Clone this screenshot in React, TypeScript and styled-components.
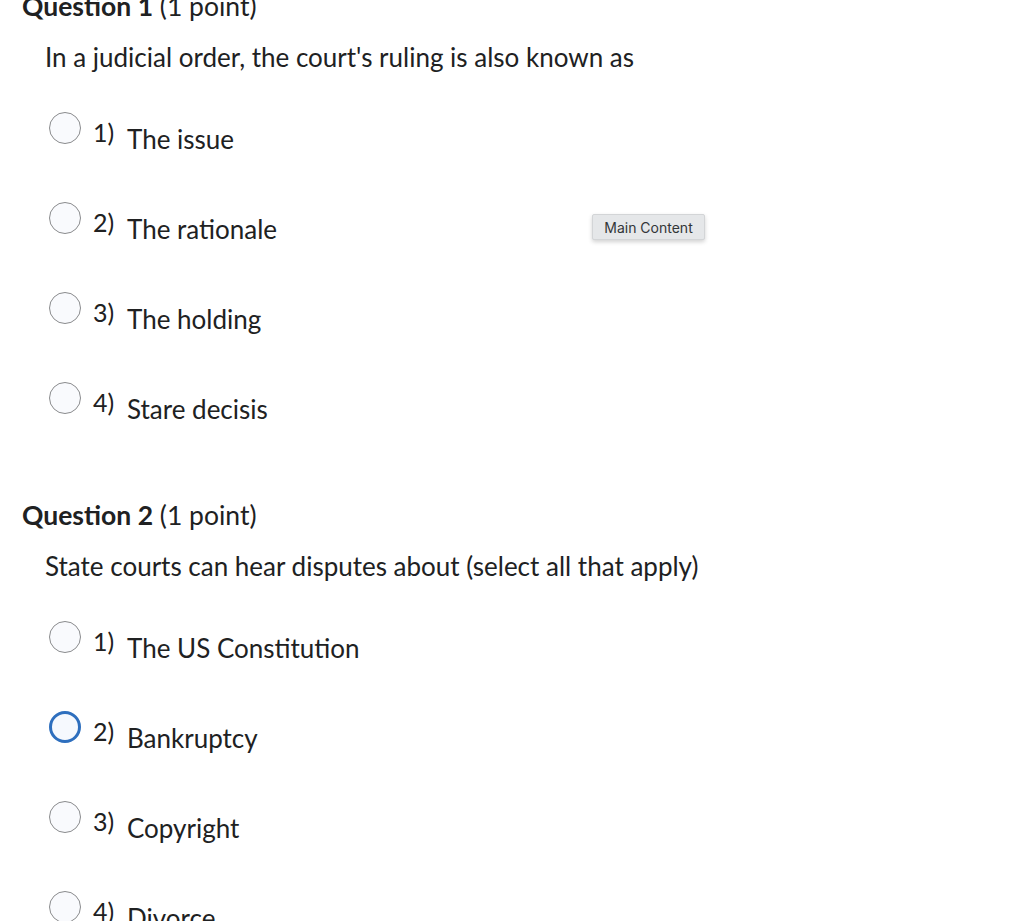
import * as React from "react";
import styled, { createGlobalStyle } from "styled-components";

interface IOption {
  label: string;
  selected?: boolean;
}

interface IQuestion {
  number: number;
  points: string;
  prompt: string;
  options: IOption[];
}

const questions: IQuestion[] = [
  {
    number: 1,
    points: "(1 point)",
    prompt: "In a judicial order, the court's ruling is also known as",
    options: [
      { label: "The issue" },
      { label: "The rationale" },
      { label: "The holding" },
      { label: "Stare decisis" }
    ]
  },
  {
    number: 2,
    points: "(1 point)",
    prompt: "State courts can hear disputes about (select all that apply)",
    options: [
      { label: "The US Constitution" },
      { label: "Bankruptcy", selected: true },
      { label: "Copyright" },
      { label: "Divorce" }
    ]
  }
];

const GlobalStyle = createGlobalStyle`
  html, body {
    margin: 0;
    padding: 0;
    background: #ffffff;
    overflow: hidden;
  }
  body {
    font-family: Lato, "Noto Sans", sans-serif;
    color: #202122;
  }
`;

const Question = ({ q }: { q: IQuestion }) => (
  <QuestionBlock>
    <Header>
      <strong>Question {q.number}</strong> {q.points}
    </Header>
    <Prompt>{q.prompt}</Prompt>
    <OptionList>
      {q.options.map((o, idx) => (
        <OptionRow key={idx}>
          <Radio selected={!!o.selected} />
          <OptionNumber>{idx + 1})</OptionNumber>
          <OptionLabel>{o.label}</OptionLabel>
        </OptionRow>
      ))}
    </OptionList>
  </QuestionBlock>
);

const App = () => (
  <>
    <GlobalStyle />
    <Page>
      {questions.map(q => (
        <Question key={q.number} q={q} />
      ))}
      <Tooltip>Main Content</Tooltip>
    </Page>
  </>
);

const Page = styled.div`
  position: relative;
  height: 921px;
  overflow: hidden;
  padding-left: 22px;
`;

const QuestionBlock = styled.section`
  display: flex;
  flex-direction: column;
  &:first-child {
    margin-top: -9px;
  }
  & + & {
    margin-top: 57px;
  }
`;

const Header = styled.h2`
  margin: 0;
  font-size: 26.5px;
  line-height: 30px;
  font-weight: 400;
  color: #202122;
  strong {
    font-weight: 700;
  }
`;

const Prompt = styled.p`
  margin: 21px 0 0 23px;
  font-size: 26px;
  line-height: 30px;
  color: #202122;
`;

const OptionList = styled.div`
  display: flex;
  flex-direction: column;
  margin-top: 11px;
  padding-left: 27px;
`;

const OptionRow = styled.div`
  display: flex;
  align-items: center;
  height: 90px;
`;

const Radio = styled.span<{ selected: boolean }>`
  box-sizing: border-box;
  flex: none;
  width: 32px;
  height: 32px;
  border-radius: 50%;
  background: ${props => (props.selected ? "#f6f9fe" : "#f9fafd")};
  border: ${props =>
    props.selected ? "3px solid #2e6fbe" : "1px solid #8a8b8d"};
`;

const OptionNumber = styled.span`
  margin: 8px 0 0 12px;
  width: 34px;
  font-size: 25px;
  line-height: 30px;
  color: #202122;
`;

const OptionLabel = styled.span`
  margin-top: 22px;
  font-size: 26px;
  line-height: 30px;
  color: #202122;
`;

const Tooltip = styled.div`
  position: absolute;
  left: 592px;
  top: 214px;
  box-sizing: border-box;
  width: 113px;
  height: 26px;
  display: flex;
  align-items: center;
  justify-content: center;
  background: #e5e7e9;
  border: 1px solid #d3d5d7;
  border-radius: 2px;
  box-shadow: 0 2px 4px rgba(0, 0, 0, 0.18);
  font-family: Inter, "Liberation Sans", Arial, sans-serif;
  font-size: 14px;
  color: #333638;
`;

export default App;
